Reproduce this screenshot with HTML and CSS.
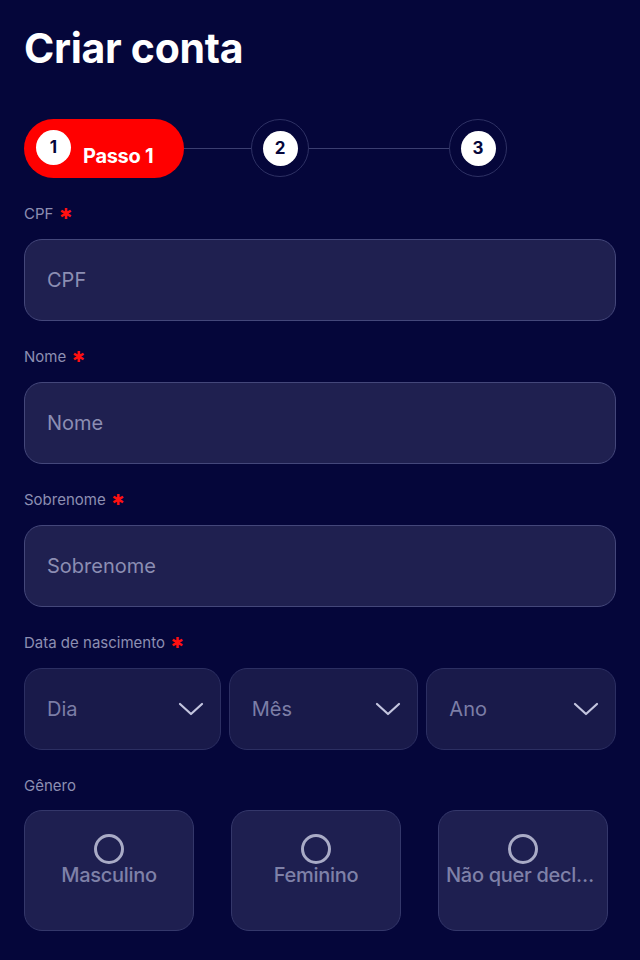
FILE: index.html
```html
<!DOCTYPE html>
<html lang="pt">
<head>
<meta charset="utf-8">
<title>Criar conta</title>
<link rel="stylesheet" href="styles.css">
</head>
<body>
<main class="page">
  <h1 class="title">Criar conta</h1>

  <div class="stepper">
    <div class="step-active">
      <span class="dot">1</span>
      <span class="step-label">Passo 1</span>
    </div>
    <span class="line line-short"></span>
    <div class="step"><span class="dot">2</span></div>
    <span class="line line-long"></span>
    <div class="step"><span class="dot">3</span></div>
  </div>

  <div class="field">
    <label class="label">CPF <span class="req">✱</span></label>
    <div class="input">CPF</div>
  </div>
  <div class="field">
    <label class="label">Nome <span class="req">✱</span></label>
    <div class="input">Nome</div>
  </div>
  <div class="field">
    <label class="label">Sobrenome <span class="req">✱</span></label>
    <div class="input">Sobrenome</div>
  </div>
  <div class="field">
    <label class="label">Data de nascimento <span class="req">✱</span></label>
    <div class="selects">
      <div class="select sel-dia"><span>Dia</span><svg class="chev" viewBox="0 0 26 16" width="26" height="16"><path d="M2 3 L13 13 L24 3" fill="none" stroke="#c3c5df" stroke-width="2.2" stroke-linecap="round" stroke-linejoin="round"/></svg></div>
      <div class="select sel-mes"><span>Mês</span><svg class="chev" viewBox="0 0 26 16" width="26" height="16"><path d="M2 3 L13 13 L24 3" fill="none" stroke="#c3c5df" stroke-width="2.2" stroke-linecap="round" stroke-linejoin="round"/></svg></div>
      <div class="select sel-ano"><span>Ano</span><svg class="chev" viewBox="0 0 26 16" width="26" height="16"><path d="M2 3 L13 13 L24 3" fill="none" stroke="#c3c5df" stroke-width="2.2" stroke-linecap="round" stroke-linejoin="round"/></svg></div>
    </div>
  </div>
  <div class="field">
    <label class="label">Gênero</label>
    <div class="genders">
      <div class="gender"><span class="radio"></span><span class="gtext">Masculino</span></div>
      <div class="gender"><span class="radio"></span><span class="gtext">Feminino</span></div>
      <div class="gender"><span class="radio"></span><span class="gtext">Não quer declarar</span></div>
    </div>
  </div>
</main>
</body>
</html>
```

FILE: styles.css
```css
* { box-sizing: border-box; }
html, body { margin: 0; padding: 0; }
body {
  background: #05063a;
  font-family: Inter, "Noto Sans", "Liberation Sans", sans-serif;
  color: #fff;
  width: 640px;
  height: 960px;
  overflow: hidden;
}
.page {
  padding: 24px 24px 0 24px;
}
.title {
  margin: 0;
  font-size: 41px;
  font-weight: 700;
  line-height: 48px;
  letter-spacing: -0.3px;
  color: #fff;
}
.stepper {
  margin-top: 46px;
  display: flex;
  align-items: center;
  height: 60px;
}
.step-active {
  width: 160px;
  height: 59px;
  background: #ff0000;
  border-radius: 30px;
  display: flex;
  align-items: center;
  padding-left: 12px;
}
.dot {
  width: 35px;
  height: 35px;
  border-radius: 50%;
  background: #fff;
  color: #05063a;
  font-weight: 700;
  font-size: 17px;
  display: flex;
  align-items: center;
  justify-content: center;
}
.step-active .dot { margin-top: -2px; }
.step-label {
  margin-left: 12px;
  margin-top: 16px;
  font-size: 20px;
  font-weight: 700;
  letter-spacing: -0.3px;
}
.line {
  height: 1px;
  background: #3b3e70;
}
.line-short { width: 67px; }
.line-long { width: 140px; }
.step {
  width: 58px;
  height: 58px;
  border-radius: 50%;
  border: 1px solid #2e3164;
  display: flex;
  align-items: center;
  justify-content: center;
}
.field { margin-top: 26px; }
.field + .field { margin-top: 26px; }
.label {
  display: flex;
  align-items: center;
  gap: 6px;
  font-size: 15px;
  line-height: 20px;
  color: #8d8fb2;
}
.req {
  color: #ff1010;
  font-family: "DejaVu Sans", sans-serif;
  font-size: 15px;
  font-weight: 700;
}
.input {
  margin-top: 15px;
  height: 82px;
  border-radius: 18px;
  background: #1f2050;
  border: 1px solid #44477a;
  display: flex;
  align-items: center;
  padding-left: 22px;
  font-size: 20px;
  color: #8c8eb3;
}
.selects {
  margin-top: 15px;
  display: flex;
  gap: 8px;
}
.select {
  height: 82px;
  border-radius: 18px;
  background: #191a4a;
  border: 1px solid #2c2f62;
  display: flex;
  align-items: center;
  justify-content: space-between;
  padding-left: 22px;
  padding-right: 16px;
  font-size: 20px;
  color: #7c7ea6;
}
.sel-dia { width: 197px; }
.sel-mes { width: 190px; }
.sel-ano { width: 190px; }
.chev { display: block; }
.genders {
  margin-top: 14px;
  display: flex;
  gap: 37px;
}
.gender {
  width: 170px;
  height: 121px;
  border-radius: 18px;
  background: #1e1f50;
  border: 1px solid #34376a;
  display: flex;
  flex-direction: column;
  align-items: center;
  padding-top: 23px;
  padding-left: 7px;
  padding-right: 7px;
}
.radio {
  width: 30px;
  height: 30px;
  border-radius: 50%;
  border: 3px solid #a9abc6;
}
.gtext {
  margin-top: -1px;
  font-size: 20px;
  font-weight: 500;
  letter-spacing: -0.3px;
  color: #7f81a8;
  max-width: 100%;
  white-space: nowrap;
  overflow: hidden;
  text-overflow: ellipsis;
}
```
